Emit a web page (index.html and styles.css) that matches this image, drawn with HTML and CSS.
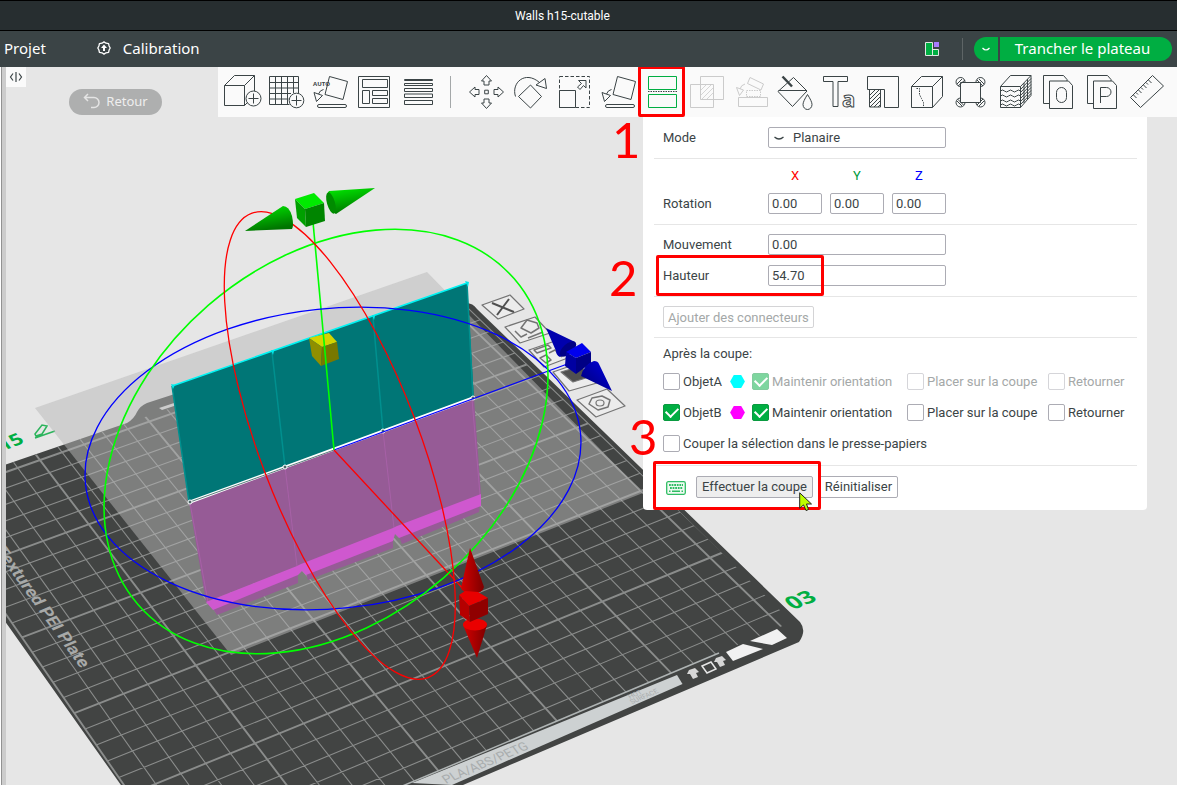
FILE: index.html
```html
<!DOCTYPE html>
<html lang="fr">
<head>
<meta charset="utf-8">
<title>Walls h15-cutable</title>
<link rel="stylesheet" href="styles.css">
</head>
<body>
<div class="app">
  <header class="titlebar"><h1 class="title">Walls h15-cutable</h1></header>
  <nav class="navbar">
    <a class="nav-link" href="#projet">Projet</a>
    <a class="nav-link nav-calibration" href="#calibration">
      <svg class="nav-icon" viewBox="0 0 14 14" aria-hidden="true"><path d="M7 .9 9 2.2 11.6 2.6 12.1 5 13.2 7 12.1 9 11.6 11.4 9 11.8 7 13.1 5 11.8 2.4 11.4 1.9 9 .8 7 1.9 5 2.4 2.6 5 2.2z" fill="none" stroke="#fff" stroke-width="1.3" stroke-linejoin="round"/><path d="M7 3.6 10 7H8v3H6V7H4z" fill="#fff"/></svg>
      Calibration
    </a>
    <div class="nav-actions">
      <button class="layout-button" aria-label="Disposition"><svg viewBox="0 0 16 16"><path d="M1.500 1.500h7v13h-7zM8.500 8.500h6v6h-6z" fill="#00ae42" stroke="#dfe8e2"/><path d="M10 1h5v5h-5z" fill="#a97bff"/></svg></button>
      <div class="slice">
        <button class="slice-more" aria-label="Options"><svg viewBox="0 0 10 5"><path d="M1.500 1q3.500 4 7 0" fill="none" stroke="#fff" stroke-width="1.200"/></svg></button>
        <button class="slice-main">Trancher le plateau</button>
      </div>
    </div>
  </nav>

  <main class="workspace">
    <svg class="scene" viewBox="0 67 1177 718" preserveAspectRatio="xMinYMin slice" aria-hidden="true">
      <defs>
        <clipPath id="plateClip"><path d="M-20 474 470 305 792 622 340 812-20 812z"/></clipPath>
        <linearGradient id="gl" x1="0" y1="0" x2=".35" y2="1"><stop offset="0" stop-color="#0e0"/><stop offset="1" stop-color="#007500"/></linearGradient>
        <linearGradient id="rl" x1="0" x2="1"><stop offset="0" stop-color="#d40000"/><stop offset="1" stop-color="#7c0000"/></linearGradient>
        <linearGradient id="bl" x1="0" y1="1" x2="1" y2="0"><stop offset="0" stop-color="#000070"/><stop offset="1" stop-color="#0000e4"/></linearGradient>
      </defs>
      <path d="M-10 470 127 423Q134 419 137 412 140 406 147 403L190 389 466 303Q473 303 477 309L800 622Q807 631 799 642L463 785 440 795H128L-10 600z" fill="#424443"/>
      <path d="M159 408l18-6v3l-15 5z" fill="#e0e0e0"/>
      <g clip-path="url(#plateClip)" fill="none" stroke="#8a8c8b">
        <path id="gridThin" stroke-width="1.100"/>
        <path id="gridBold" stroke-width="1.900"/>
      </g>
      <path d="M412 783 677 675 682.500 684 452 785z" fill="#cdd1d2"/>
      <path d="M400 787 719 653" stroke="#aeb3b3" stroke-width="1.500"/>
      <path d="M750 641 777 629 787 638 772 645zM726 652 743 644 763 649 733 661z" fill="#f1f1f1"/>
      <path d="M702 666l9-4 5 7-9 4z" fill="none" stroke="#e6e6e6" stroke-width="1.500"/>
      <path d="M687 674l2-4 6-2 4 4-3 1 2 4-5 2-3-5zM714 662l2-4 6-2 4 4-3 1 2 4-5 2-3-5z" fill="#d6d6d6"/>
      <text class="plate-note" transform="matrix(.92 -.39 .6 .8 446 784)" font-size="13">PLA/ABS/PETG</text>
      <text class="plate-note" transform="matrix(.92 -.39 .6 .8 630 699)" font-size="7">HOT</text>
      <text class="plate-note" transform="matrix(.92 -.39 .6 .8 632 704)" font-size="7">SURFACE</text>
      <text class="plate-name" transform="matrix(.58 .8 -.86 .36 -6 549)" font-size="18">Textured PEI Plate</text>
      <text class="plate-id" transform="matrix(.93 -.36 .64 .62 793 610)" font-size="24">03</text>
      <text class="plate-id" transform="matrix(.93 -.36 .52 .68 3 451)" font-size="21">15</text>
      <path d="M35 434l7-9 5 1-5 8-6 2zM35 438l20-7" fill="none" stroke="#2cb45c" stroke-width="1.500"/>

      <g fill="#ececec" stroke="#747474" stroke-width="1.200" stroke-linejoin="round">
        <path d="M482 305 510 295 524 309 498 319zM505 327 535 317 550 333 520 343zM529 350 558 340 573 356 544 367zM553 372 582 362 597 383 569 391zM577 400 607 389 625 406 596 417z"/>
        <path d="M492 303 514 312M509 299 497 315" stroke="#505050" stroke-width="2" fill="none"/>
        <path d="M521 328 527 320 537 323 539 328 531 333zM515 331 521 337 527 334M528 338 543 332" stroke-width="1.500"/>
        <path d="M534 350 548 345 551 348 537 353zM540 358 546 355 551 360 546 363zM549 353 555 350 562 357M557 348l8 8" stroke-width="1.500"/>
        <path d="M561 372 581 366 589 377 573 382z" fill="#505050"/>
        <path d="M589 404 592 398 602 396 610 400 608 407 598 410z" stroke-width="1.500"/><ellipse cx="600" cy="403" rx="4" ry="3"/>
      </g>

      <path d="M35 408 427 272 643 493 231 655z" fill="#b8b8b8" fill-opacity=".5"/>

      <path d="M172 386 467 283 474 398 189 502z" fill="#007676"/>
      <path d="M189 502 474 398 481 495 206 602z" fill="#965b96"/>
      <path d="M172 386 189 502M272 352 285 467M373 317 383 431M467 283 473 398" stroke="#00908f" stroke-width="1.500"/>
      <path d="M190 503 208 602M285 467 297 566M383 431 394 528M472 399 480 495" stroke="#a761a7"/>
      <path d="M213 609 298 574V583L217 615zM306 574 393 540V548L308 580zM399 537 480 504 479 512 402 544z" fill="#965b96"/>
      <path d="M206 602 297 566 301 564 393 528 397 526 481 494V506L399 538 395 534 393 541 306 575 302 571 298 575 213 610z" fill="#cf58cf"/>
      <path d="M172 386 467 283" stroke="#00f4f4" stroke-width="1.500"/>
      <path d="M171 384l4 1-2 4zM271 350l3 1-1 4zM372 315l3 1-1 4zM465 281l4 1-1 5z" fill="#00e8e8"/>
      <path d="M190 502 473 398" stroke="#fff" stroke-width="3"/>
      <path d="M190 502 334 450" stroke="#597c7c"/>
      <g fill="#4c6969" stroke="#fff"><circle cx="190" cy="502" r="2"/><circle cx="285" cy="467" r="2"/><circle cx="383" cy="431" r="2"/><circle cx="473" cy="398" r="2"/></g>

      <path d="M309 338 329 333 337 342 322 347z" fill="#d4d400"/><path d="M309 338 322 347 321 366 312 356z" fill="#8f8f00"/><path d="M322 347 337 342 339 359 321 366z" fill="#787800"/>
      <g fill="none" stroke-width="1.300">
        <path d="M334 450 570 363" stroke="#00f"/>
        <path d="M313 222 334 450" stroke="#0f0" stroke-width="1.600"/>
        <path d="M334 450 466 592" stroke="#f00"/>
        <ellipse rx="248.800" ry="150" transform="translate(333 458.500) rotate(-5.900)" stroke="#00f"/>
        <ellipse rx="248.800" ry="180" transform="translate(326 441.500) rotate(-40.900)" stroke="#0f0" stroke-width="1.600"/>
        <ellipse rx="248.300" ry="79.600" transform="translate(339.800 445.500) rotate(69.150)" stroke="#f00"/>
      </g>
      <path d="M245 231 283 206Q289 206 292 216 294 226 292 229z" fill="url(#gl)"/>
      <path d="M375 188 329 191Q326 194 328 202 331 212 336 214z" fill="url(#gl)"/>
      <ellipse cx="331" cy="203" rx="4" ry="11" transform="rotate(-16 331 203)" fill="#008c00"/>
      <path d="M295 199 314 193 324 203 305 209z" fill="#00ea00"/><path d="M295 199 305 209 306 227 297 218z" fill="#00a000"/><path d="M305 209 324 203 325 221 306 227z" fill="#008500"/>
      <path d="M546 328 573 341Q577 343 576 346L560 357Q556 355 556 351z" fill="#0000ae"/>
      <ellipse cx="568" cy="349" rx="5" ry="10" transform="rotate(48 568 349)" fill="#000085"/>
      <path d="M566 352 582 343 591 352 576 358z" fill="#0000ed"/><path d="M566 352 576 358V374L565 366z" fill="#0000a2"/><path d="M576 358 591 352V363L576 374z" fill="#000085"/>
      <path d="M612 391 581 376Q584 364 594 361 598 361 599 364z" fill="url(#bl)"/>
      <path d="M470 548 461 588Q463 593 472 594 483 593 484 587z" fill="url(#rl)"/>
      <path d="M463 625 477 658 487 625z" fill="url(#rl)"/><ellipse cx="475" cy="624.500" rx="12" ry="6" fill="#ea0000"/>
      <path d="M459 595 465 591 478 592 488 598 469 606z" fill="#e80000"/><path d="M459 595 469 606 470 622 460 615z" fill="#b50000"/><path d="M469 606 488 598V614L470 622z" fill="#900000"/>
    </svg>

    <div class="side-rail"></div>
    <button class="collapse" aria-label="Replier"><svg viewBox="0 0 14 10"><path d="M4 1.500 1.500 5 4 8.500M7 0v10M10 1.500 12.500 5 10 8.500" fill="none" stroke="#3b4446" stroke-width="1.200"/></svg></button>
    <button class="back"><svg viewBox="0 0 18 16"><path d="M5 1 1.500 4.500 5 8M2 4.500h9a5 5 0 0 1 0 10H8" fill="none" stroke="#e4e4e4" stroke-width="1.500"/></svg>Retour</button>

    <div class="toolbar" role="toolbar" aria-label="Outils">
      <button class="tool" aria-label="Ajouter"><svg viewBox="0 0 44 50"><path d="M4.500 18.500h20v20h-20zM4.500 18.500l10-10h20l-10 10M34.500 8.500V24M24.500 38.500l3-3"/><circle cx="33.500" cy="31.500" r="7.500"/><path d="M33.500 26.500v10M28.500 31.500h10"/></svg></button>
      <button class="tool" aria-label="Ajouter un plateau"><svg viewBox="0 0 44 50"><path d="M5.500 9.500h29V26M5.500 9.500v28h20M11.500 9.500v28M17.500 9.500v28M23.500 9.500v28M29.500 9.500V26M5.500 15.500h29M5.500 21h29M5.500 26.500H27M5.500 32h19"/><circle cx="32.500" cy="33.500" r="7.300"/><path d="M32.500 28.500v10M27.500 33.500h10"/></svg></button>
      <button class="tool" aria-label="Orientation automatique"><svg viewBox="0 0 44 50"><path d="M21.500 9.500 39.500 14.500 35 32.500 17 27.500zM6 25.500 14.500 28.500 8.500 34.500zM15.500 22.500Q12 23 10.500 27"/><rect x="9.500" y="37.500" width="29" height="3" rx="1.500"/><text x="5" y="19" class="auto-text">AUTO</text></svg></button>
      <button class="tool" aria-label="Arranger"><svg viewBox="0 0 44 50"><path d="M6.500 9.500h31v31h-31zM10.500 12.500h25v8h-25zM10.500 23.500h7v13h-7zM20.500 23.500h15v5h-15zM20.500 31.500h15v5h-15z"/></svg></button>
      <button class="tool" aria-label="Hauteur de couche"><svg viewBox="0 0 44 50"><path d="M8.500 12.500h28v1h-28zM8.500 16.500h28v2h-28zM8.500 21.500h28v3h-28zM8.500 27h28v3.500h-28zM8.500 33.500h28v4h-28z"/></svg></button>
      <span class="tool-separator"></span>
      <button class="tool" aria-label="Déplacer"><svg viewBox="0 0 44 50"><path d="M22.500 8.500 27.500 14H25v4h-5v-4h-2.500zM22.500 41.500 27.500 36H25v-4h-5v4h-2.500zM5.500 25 11 20v2.500h4v5h-4V30zM39.500 25 34 20v2.500h-4v5h4V30zM20.700 23.200h3.600v3.600h-3.600z"/></svg></button>
      <button class="tool" aria-label="Rotation"><svg viewBox="0 0 44 50"><path d="M22.500 18 33.500 29.500 22.500 41 10.500 29.500zM7.500 29.500C3 16 17 3 31.500 15.500M28 18 37 11.500 38.500 21.500z"/></svg></button>
      <button class="tool" aria-label="Échelle"><svg viewBox="0 0 44 50"><path d="M7.500 9.500h30v31h-30z" stroke-dasharray="3.500 2"/><path d="M7.500 23.500h16v17h-16zM26.500 13.500H34V21L31.500 18.500 28 22.500 25.500 20 29.500 16.500z"/></svg></button>
      <button class="tool" aria-label="Poser sur une face"><svg viewBox="0 0 44 50"><path d="M21.500 9.500 39.500 14.500 35 32.500 17 27.500zM6 25.500 14.500 28.500 8.500 34.500zM15.500 22.500Q12 23 10.500 27"/><rect x="9.500" y="37.500" width="29" height="3" rx="1.500"/></svg></button>
      <button class="tool tool-active" aria-label="Couper" aria-pressed="true"><svg viewBox="0 0 44 50"><path d="M8.500 9.500h28v13h-28zM8.500 27.500h28v13h-28z"/><path d="M8 24.500h29" stroke="#3b4446" stroke-dasharray="1.500 1"/></svg><span class="mark mark-tool"></span></button>
      <button class="tool" aria-label="Booléen" disabled><svg viewBox="0 0 44 50"><path d="M16.500 9.500h23v23h-23zM6.500 17.500h23v23h-23z"/><path d="M17 23l5-5M17 28l10-10M18 32l11-11M23 32l6-6" stroke-width=".8"/></svg></button>
      <button class="tool" aria-label="Assembler" disabled><svg viewBox="0 0 44 50"><path d="M22 10.500 35.500 17 33 23 19.500 16.500zM10.500 30.500h29v9h-29zM8.500 20.500 15.500 23 11.500 28.500zM17 17Q13 18 12 22"/><path d="M18.500 23.500h14v6h-14z" stroke-dasharray="1.500 1"/></svg></button>
      <button class="tool" aria-label="Peinture"><svg viewBox="0 0 44 50"><path d="M21.500 10.500 35 24 20.500 39.500 6 24.500zM6.500 23.500h28M35.500 27.500q-4.500 7-4.500 10a4.500 5 0 0 0 9 0q0-3-4.500-10z"/><path d="M10.500 9.500 20 19.500" stroke-width="2.500"/></svg></button>
      <button class="tool" aria-label="Texte"><svg viewBox="0 0 44 50"><path d="M7.500 9.500h24v5h-9.500v25h-5v-25H7.500z"/><text x="26" y="40" class="outline-text">a</text></svg></button>
      <button class="tool" aria-label="Supports"><svg viewBox="0 0 44 50"><path d="M7.500 9.500h31v31h-14v-18h-17zM9.500 22.500v17.500h11V22.500M10 28l5-5M10 32l9-9M10 36l10.500-10.500M10 40l10.500-10.500M14 40l6.500-6.500M18 40l2.500-2.500"/></svg></button>
      <button class="tool" aria-label="Couture"><svg viewBox="0 0 44 50"><path d="M7.500 19.500h21v21h-21zM7.500 19.500l10-10h21l-10 10M38.500 9.500v20l-10 11"/><path d="M12.500 21.500h3v6l2 4 2 4v5" stroke-dasharray="1.500 1"/></svg></button>
      <button class="tool" aria-label="Bordure à oreilles"><svg viewBox="0 0 44 50"><path d="M12.500 15.500h20v20h-20zM12.500 19.500a4.500 4.500 0 1 1 4.500-4M28 15.500a4.500 4.500 0 1 1 4.500 4M32.500 31a4.500 4.500 0 1 1-4.500 4.500M17 35.500a4.500 4.500 0 1 1-4.500-4.500M9 17l5-5M10 19l7-6M36 17l-5-5M35 19l-6-6M9 34l5 5M9.500 32l6 6M36 34l-5 5M35 32l-6 6"/></svg></button>
      <button class="tool" aria-label="Texture"><svg viewBox="0 0 44 50"><path d="M8.500 19.500h20v21h-20zM8.500 19.500l10-11h20.500l-10.500 11M39 8.500v20l-10.500 12M28.500 22.500 39 11.500M28.500 25.500 39 14.500M28.500 28.500 39 17.500M28.500 31.500 39 20.500M28.500 34.500 39 23.500M28.500 37.500 39 26.500M32 16v20M35.500 12v20"/><path d="M8.500 24q2-2 4 0t4 0 4 0 4 0 4 0M8.500 29q2-2 4 0t4 0 4 0 4 0 4 0M8.500 34q2-2 4 0t4 0 4 0 4 0 4 0M8.500 38q2-2 4 0t4 0 4 0 4 0 4 0"/></svg></button>
      <button class="tool" aria-label="Copier O"><svg viewBox="0 0 44 50"><path d="M13 36.500H7.500v-28h20l3.500 4v1.500M13.500 14h19l4 4.500v23h-23z"/><rect x="20.500" y="20.500" width="10" height="15" rx="5"/></svg></button>
      <button class="tool" aria-label="Copier P"><svg viewBox="0 0 44 50"><path d="M13 36.500H7.500v-28h20l3.500 4v1.500M13.500 14h19l4 4.500v23h-23zM20.500 36V20.500h6a4.500 4.500 0 0 1 0 9h-6"/></svg></button>
      <button class="tool" aria-label="Mesurer"><svg viewBox="0 0 44 50"><path d="M28.500 8.500 39.500 19 16.500 40.500 6.500 30.500zM9.500 28l3 3M12 25.500l2 2M14.500 23l3 3M17 20.500l2 2M19.500 18l3 3M22 15.500l2 2M24.500 13l3 3"/></svg></button>
    </div>

    <section class="panel" aria-label="Couper">
      <div class="group group-mode">
        <div class="row"><label class="label" for="mode">Mode</label>
          <span class="select-wrap"><svg viewBox="0 0 10 5"><path d="M.5 1q4.500 4 9 0" fill="none" stroke="#3b4446" stroke-width="1.200"/></svg><select class="field select" id="mode"><option>Planaire</option></select></span></div>
      </div>
      <div class="group group-rotation">
        <div class="row"><span class="label"></span><div class="triple axes"><label class="axis-x" for="rx">X</label><label class="axis-y" for="ry">Y</label><label class="axis-z" for="rz">Z</label></div></div>
        <div class="row"><span class="label">Rotation</span><div class="triple"><input class="field" id="rx" value="0.00"><input class="field" id="ry" value="0.00"><input class="field" id="rz" value="0.00"></div></div>
      </div>
      <div class="group group-position">
        <div class="row"><label class="label" for="move">Mouvement</label><input class="field" id="move" value="0.00"></div>
        <div class="row"><label class="label" for="height">Hauteur</label><input class="field" id="height" value="54.70"><span class="mark mark-height"></span></div>
      </div>
      <div class="group group-connectors"><button class="button" disabled>Ajouter des connecteurs</button></div>
      <div class="group group-after">
        <p class="heading">Après la coupe:</p>
        <div class="options">
          <label class="check"><input type="checkbox">ObjetA</label>
          <svg class="hex" viewBox="0 0 16 14"><path d="M4 0h8l4 7-4 7H4L0 7z" fill="#0ff"/></svg>
          <label class="check"><input type="checkbox" checked disabled>Maintenir orientation</label>
          <label class="check"><input type="checkbox" disabled>Placer sur la coupe</label>
          <label class="check"><input type="checkbox" disabled>Retourner</label>
        </div>
        <div class="options">
          <label class="check"><input type="checkbox" checked>ObjetB</label>
          <svg class="hex" viewBox="0 0 16 14"><path d="M4 0h8l4 7-4 7H4L0 7z" fill="#f0f"/></svg>
          <label class="check"><input type="checkbox" checked>Maintenir orientation</label>
          <label class="check"><input type="checkbox">Placer sur la coupe</label>
          <label class="check"><input type="checkbox">Retourner</label>
        </div>
        <div class="clip-row"><label class="check"><input type="checkbox">Couper la sélection dans le presse-papiers</label></div>
      </div>
      <div class="group group-actions">
        <svg class="keyboard" viewBox="0 0 20 14"><rect x=".7" y=".7" width="18.600" height="12.600" rx="1.500" fill="#effaf2" stroke="#2fbd63" stroke-width="1.300"/><path d="M3 4h14M4 7h13" stroke="#2fbd63" stroke-width="1.800" stroke-dasharray="1.800 .8"/><path d="M3 10.300h1.500M6 10.300h8M15.500 10.300H17" stroke="#2fbd63" stroke-width="1.600"/></svg>
        <button class="button button-hover">Effectuer la coupe</button>
        <button class="button">Réinitialiser</button>
        <span class="mark mark-action"></span>
        <svg class="cursor" viewBox="0 0 13 19"><path d="M.7.8v15.500l3.800-3.400L7 18.500l2.500-1-2-5.500h5z" fill="#bdff00" stroke="#222"/></svg>
      </div>
      <span class="step step-one">1</span>
      <span class="step step-two">2</span>
      <span class="step step-three">3</span>
    </section>
  </main>
</div>
<script src="grid.js"></script>
</body>
</html>
```
FILE: grid.js
```js
// Projects the build plate grid (millimetres) onto the camera view.
const origin = [255, 743.3], right = [710, 557.7], back = [40, 460];
const g = 0.0755, h = 0.1369;

function project(x, y) {
  const u = (x - 50) / 200, v = (y - 50) / 200;
  const w = 1 + g * u + h * v;
  return [0, 1].map(i =>
    ((origin[i] + u * (right[i] * (1 + g) - origin[i]) + v * (back[i] * (1 + h) - origin[i])) / w).toFixed(1)
  ).join(' ');
}

const lines = { gridThin: '', gridBold: '' };
const size = 256;
for (let mm = 0; mm <= 250; mm += 10) {
  const kind = mm % 50 === 0 ? 'gridBold' : 'gridThin';
  lines[kind] += `M${project(mm, 0)}L${project(mm, size)}M${project(0, mm)}L${project(size, mm)}`;
}
lines.gridThin += `M${project(size, 0)}L${project(size, size)}L${project(0, size)}`;
for (const id in lines) document.getElementById(id).setAttribute('d', lines[id]);
```
FILE: styles.css
```css
* { box-sizing: border-box; }
body { margin: 0; font-family: Roboto, "Noto Sans", sans-serif; font-size: 13px; color: #3b4446; background: #e6e6e6; }
button, input, select { font: inherit; color: inherit; margin: 0; }
button { border: 0; padding: 0; background: none; }
.app { display: flex; flex-direction: column; height: 100vh; overflow: hidden; }

.titlebar { height: 31px; flex: none; display: flex; align-items: center; justify-content: center; background: #272e30; border-top: 1px solid #000; border-bottom: 1px solid #000; }
.title { margin: 0; padding-right: 52px; font: 400 12px Roboto, sans-serif; color: #fff; }
.navbar { height: 36px; flex: none; display: flex; align-items: center; background: #3b4446; padding: 0 5px 0 4px; font-family: "Noto Sans", sans-serif; font-size: 15px; color: #fff; }
.nav-link { color: inherit; text-decoration: none; padding-bottom: 2px; }
.nav-calibration { display: flex; align-items: center; gap: 12px; margin-left: 51px; }
.nav-icon { width: 14px; height: 14px; }
.nav-actions { display: flex; align-items: center; margin-left: auto; }
.layout-button { width: 39px; height: 22px; border-right: 1px solid #5e6566; display: flex; align-items: center; }
.layout-button svg { width: 16px; height: 16px; }
.slice { display: flex; gap: 2px; margin-left: 11px; }
.slice button { height: 24px; background: #00ae42; display: flex; align-items: center; justify-content: center; color: #fff; }
.slice .slice-more { width: 24px; border-radius: 12px 0 0 12px; }
.slice-more svg { width: 10px; height: 5px; }
.slice .slice-main { width: 172px; padding: 0 7px 2px 0; border-radius: 0 12px 12px 0; }

.workspace { position: relative; flex: 1; min-height: 0; background: #e6e6e6; overflow: hidden; }
.scene { position: absolute; inset: 0; width: 100%; height: 100%; }
.plate-name { font-family: Roboto, sans-serif; fill: #a7a9a8; font-weight: 700; }
.plate-note { font-family: Roboto, sans-serif; fill: #a9adae; }
.plate-id { font-family: "Open Sans", sans-serif; fill: #00ae42; font-weight: 700; }
.side-rail { position: absolute; left: 0; top: 0; bottom: 0; width: 6px; background: #ccc; border-left: 1px solid #fff; box-shadow: inset 1px 0 #929292; }
.collapse { position: absolute; left: 6px; top: 0; width: 20px; height: 20px; background: #fafafa; display: flex; align-items: center; justify-content: center; }
.collapse svg { width: 14px; height: 10px; }
.back { position: absolute; left: 69px; top: 22px; width: 93px; height: 26px; padding-bottom: 2px; border-radius: 13px; background: #aeafaf; color: #eee; font-family: "Noto Sans", sans-serif; display: flex; align-items: center; justify-content: center; gap: 5px; }
.back svg { width: 18px; height: 16px; }

.toolbar { position: relative; margin-left: 218px; height: 50px; padding-left: 2px; background: #fafafa; display: flex; }
.tool { position: relative; flex: none; width: 44px; height: 50px; color: #3b4446; }
.tool svg { display: block; width: 44px; height: 50px; fill: none; stroke: currentColor; stroke-width: 1; }
.tool:disabled { color: #cbcbcb; }
.tool-active { color: #00ae42; }
.tool-separator { flex: none; width: 24px; height: 32px; margin-top: 9px; background: linear-gradient(#a4a8a9, #a4a8a9) 10px 0 / 1px 100% no-repeat; }
.auto-text { font: 700 6px "Open Sans", sans-serif; fill: currentColor; stroke: none; }
.outline-text { font: 700 22px "Open Sans", sans-serif; }

.panel { position: absolute; right: 30px; top: 50px; width: 504px; padding: 0 10px 0 11px; background: #fff; border-radius: 0 0 4px 4px; }
.group { padding-left: 9px; border-bottom: 1px solid #e6e6e6; }
.group:nth-of-type(6) { border: 0; }
.row { position: relative; display: flex; align-items: center; }
.label { width: 105px; flex: none; }
.field { width: 178px; height: 21px; padding: 0 3px; border: 1px solid #acacb4; border-radius: 2px; background: #fff; outline: 0; }
.select-wrap { position: relative; display: flex; }
.select-wrap svg { position: absolute; left: 6px; top: 9px; width: 10px; height: 5px; }
.select { appearance: none; padding-left: 24px; }
.triple { display: grid; grid-template-columns: repeat(3, 54px); gap: 8px; }
.triple .field { width: 54px; }
.axes { text-align: center; }
.axis-x { color: #f00; } .axis-y { color: #009a3a; } .axis-z { color: #00f; }
.group-mode .row { height: 41px; }
.group-rotation { padding-top: 2px; padding-bottom: 7px; }
.group-rotation .row { height: 28px; }
.group-position { padding-top: 4px; padding-bottom: 5px; }
.group-position .row { height: 31px; }
.group-connectors { height: 41px; display: flex; align-items: center; }
.button { height: 22px; padding: 0 4px; border: 1px solid #acacb4; border-radius: 2px; background: #fff; white-space: nowrap; }
.button:disabled { color: #a4a8a8; border-color: #d4d4d6; }
.button-hover { background: #eee; }
.group-after { padding-top: 4px; padding-bottom: 6px; }
.heading { margin: 0; height: 24px; line-height: 24px; }
.options { display: grid; grid-template-columns: 67px 22px 155px 141px 1fr; align-items: center; height: 31px; }
.clip-row { display: flex; align-items: center; height: 31px; }
.check { display: flex; align-items: center; gap: 3px; white-space: nowrap; }
.check input { appearance: none; flex: none; width: 17px; height: 17px; border: 1px solid #acacb4; border-radius: 2px; background: #fff; }
.check input:checked { border-color: #0a9a40; background: #00ae42; }
.check input:checked::after { content: ""; display: block; width: 6px; height: 10px; margin: 0 auto; border: solid #fff; border-width: 0 2px 2px 0; transform: rotate(45deg); }
.check:has(input:disabled) { color: #a4a8a8; }
.check input:disabled { opacity: .5; }
.hex { width: 15px; height: 13px; }
.group-actions { position: relative; display: flex; align-items: center; height: 44px; padding-bottom: 3px; }
.keyboard { width: 20px; height: 14px; margin: 2px 10px 0 3px; }
.group-actions .button { padding: 0 5px; margin-right: 6px; }

.mark { position: absolute; border: 3px solid #f00; border-radius: 2px; pointer-events: none; z-index: 2; }
.mark-tool { left: -2px; top: -1px; width: 47px; height: 51px; }
.mark-height { left: -7px; top: -5px; width: 168px; height: 41px; }
.mark-action { left: -1px; top: -5px; width: 168px; height: 49px; }
.cursor { position: absolute; left: 145px; top: 26px; width: 13px; height: 19px; z-index: 3; }
.step { position: absolute; font: 400 49px/50px Lato, sans-serif; color: #f00; }
.step-one { left: -31px; top: -3px; }
.step-two { left: -34px; top: 135px; }
.step-three { left: -14px; top: 294px; }
```
